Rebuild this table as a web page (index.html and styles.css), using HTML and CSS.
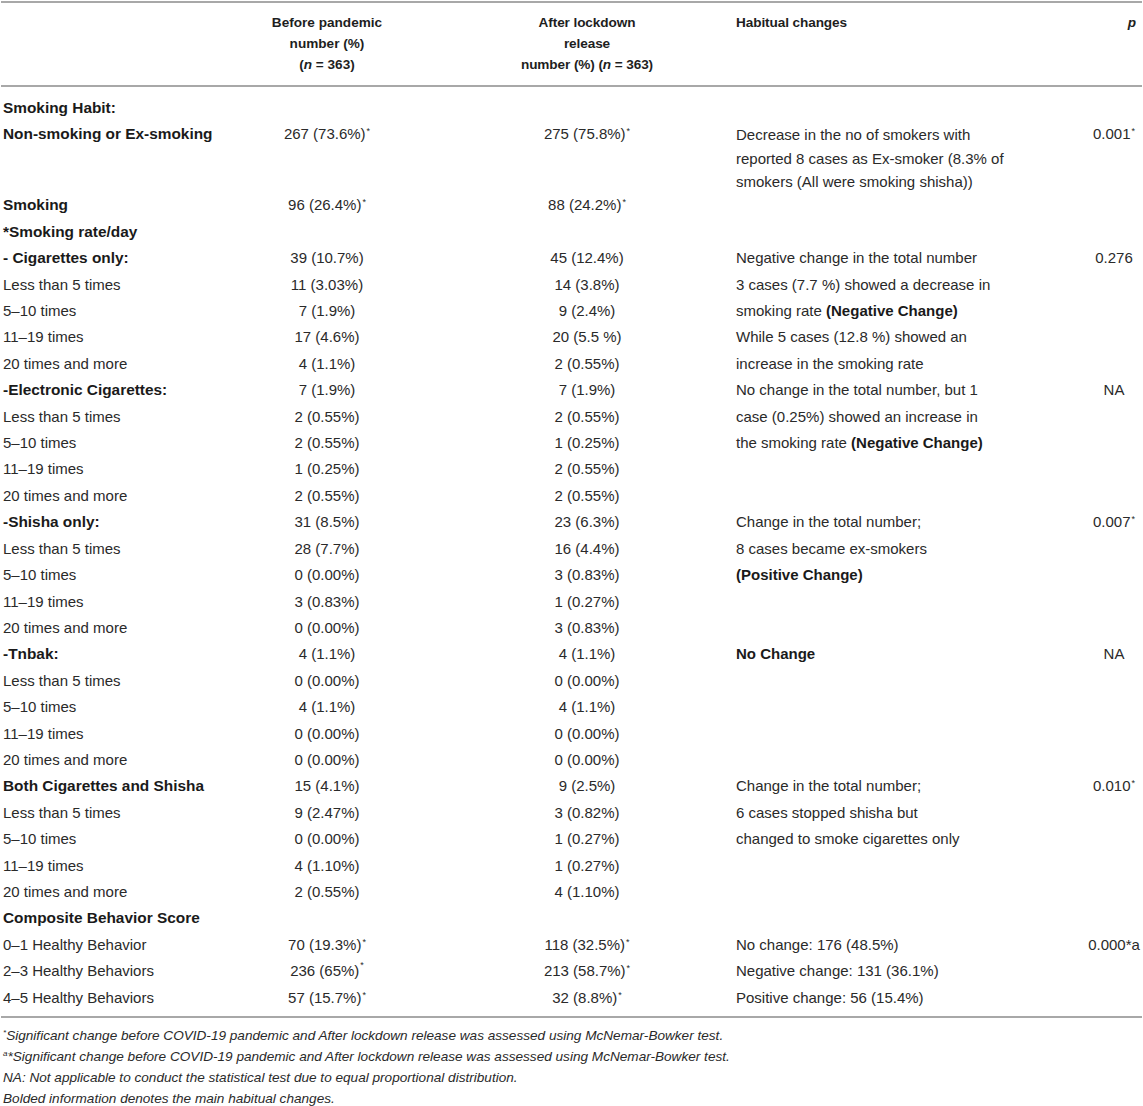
FILE: index.html
```html
<!DOCTYPE html>
<html>
<head>
<meta charset="utf-8">
<link rel="stylesheet" href="styles.css">
</head>
<body>
<div class="wrap">
<table class="tbl">
<colgroup>
<col class="c1"><col class="c2"><col class="c3"><col class="c4"><col class="c5">
</colgroup>
<thead>
<tr>
<th class="h-first"></th>
<th class="h-num">Before pandemic<br>number (%)<br>(<i>n</i> = 363)</th>
<th class="h-num h-narrow">After lockdown<br>release<br>number (%) (<i>n</i> = 363)</th>
<th class="h-text h-narrow">Habitual changes</th>
<th class="h-p"><i>p</i></th>
</tr>
</thead>
<tbody>
<tr class="first"><td class="b">Smoking Habit:</td><td></td><td></td><td></td><td></td></tr>
<tr class="multi"><td class="b">Non-smoking or Ex-smoking</td><td class="n">267 (73.6%)<sup>*</sup></td><td class="n">275 (75.8%)<sup>*</sup></td><td class="t"><div class="lines">Decrease in the no of smokers with<br>reported 8 cases as Ex-smoker (8.3% of<br>smokers (All were smoking shisha))</div></td><td class="n">0.001<sup>*</sup></td></tr>
<tr><td class="b">Smoking</td><td class="n">96 (26.4%)<sup>*</sup></td><td class="n">88 (24.2%)<sup>*</sup></td><td></td><td></td></tr>
<tr><td class="b">*Smoking rate/day</td><td></td><td></td><td></td><td></td></tr>
<tr><td class="b">- Cigarettes only:</td><td class="n">39 (10.7%)</td><td class="n">45 (12.4%)</td><td class="t">Negative change in the total number</td><td class="n">0.276</td></tr>
<tr><td>Less than 5 times</td><td class="n">11 (3.03%)</td><td class="n">14 (3.8%)</td><td class="t">3 cases (7.7 %) showed a decrease in</td><td></td></tr>
<tr><td>5–10 times</td><td class="n">7 (1.9%)</td><td class="n">9 (2.4%)</td><td class="t">smoking rate <b>(Negative Change)</b></td><td></td></tr>
<tr><td>11–19 times</td><td class="n">17 (4.6%)</td><td class="n">20 (5.5 %)</td><td class="t">While 5 cases (12.8 %) showed an</td><td></td></tr>
<tr><td>20 times and more</td><td class="n">4 (1.1%)</td><td class="n">2 (0.55%)</td><td class="t">increase in the smoking rate</td><td></td></tr>
<tr><td class="b">-Electronic Cigarettes:</td><td class="n">7 (1.9%)</td><td class="n">7 (1.9%)</td><td class="t">No change in the total number, but 1</td><td class="n">NA</td></tr>
<tr><td>Less than 5 times</td><td class="n">2 (0.55%)</td><td class="n">2 (0.55%)</td><td class="t">case (0.25%) showed an increase in</td><td></td></tr>
<tr><td>5–10 times</td><td class="n">2 (0.55%)</td><td class="n">1 (0.25%)</td><td class="t">the smoking rate <b>(Negative Change)</b></td><td></td></tr>
<tr><td>11–19 times</td><td class="n">1 (0.25%)</td><td class="n">2 (0.55%)</td><td></td><td></td></tr>
<tr><td>20 times and more</td><td class="n">2 (0.55%)</td><td class="n">2 (0.55%)</td><td></td><td></td></tr>
<tr><td class="b">-Shisha only:</td><td class="n">31 (8.5%)</td><td class="n">23 (6.3%)</td><td class="t">Change in the total number;</td><td class="n">0.007<sup>*</sup></td></tr>
<tr><td>Less than 5 times</td><td class="n">28 (7.7%)</td><td class="n">16 (4.4%)</td><td class="t">8 cases became ex-smokers</td><td></td></tr>
<tr><td>5–10 times</td><td class="n">0 (0.00%)</td><td class="n">3 (0.83%)</td><td class="t"><b>(Positive Change)</b></td><td></td></tr>
<tr><td>11–19 times</td><td class="n">3 (0.83%)</td><td class="n">1 (0.27%)</td><td></td><td></td></tr>
<tr><td>20 times and more</td><td class="n">0 (0.00%)</td><td class="n">3 (0.83%)</td><td></td><td></td></tr>
<tr><td class="b">-Tnbak:</td><td class="n">4 (1.1%)</td><td class="n">4 (1.1%)</td><td class="t"><b>No Change</b></td><td class="n">NA</td></tr>
<tr><td>Less than 5 times</td><td class="n">0 (0.00%)</td><td class="n">0 (0.00%)</td><td></td><td></td></tr>
<tr><td>5–10 times</td><td class="n">4 (1.1%)</td><td class="n">4 (1.1%)</td><td></td><td></td></tr>
<tr><td>11–19 times</td><td class="n">0 (0.00%)</td><td class="n">0 (0.00%)</td><td></td><td></td></tr>
<tr><td>20 times and more</td><td class="n">0 (0.00%)</td><td class="n">0 (0.00%)</td><td></td><td></td></tr>
<tr><td class="b">Both Cigarettes and Shisha</td><td class="n">15 (4.1%)</td><td class="n">9 (2.5%)</td><td class="t">Change in the total number;</td><td class="n">0.010<sup>*</sup></td></tr>
<tr><td>Less than 5 times</td><td class="n">9 (2.47%)</td><td class="n">3 (0.82%)</td><td class="t">6 cases stopped shisha but</td><td></td></tr>
<tr><td>5–10 times</td><td class="n">0 (0.00%)</td><td class="n">1 (0.27%)</td><td class="t">changed to smoke cigarettes only</td><td></td></tr>
<tr><td>11–19 times</td><td class="n">4 (1.10%)</td><td class="n">1 (0.27%)</td><td></td><td></td></tr>
<tr><td>20 times and more</td><td class="n">2 (0.55%)</td><td class="n">4 (1.10%)</td><td></td><td></td></tr>
<tr><td class="b">Composite Behavior Score</td><td></td><td></td><td></td><td></td></tr>
<tr><td>0–1 Healthy Behavior</td><td class="n">70 (19.3%)<sup>*</sup></td><td class="n">118 (32.5%)<sup>*</sup></td><td class="t">No change: 176 (48.5%)</td><td class="n">0.000*a</td></tr>
<tr><td>2–3 Healthy Behaviors</td><td class="n">236 (65%)<sup class="hi">*</sup></td><td class="n">213 (58.7%)<sup>*</sup></td><td class="t">Negative change: 131 (36.1%)</td><td></td></tr>
<tr class="last"><td>4–5 Healthy Behaviors</td><td class="n">57 (15.7%)<sup>*</sup></td><td class="n">32 (8.8%)<sup>*</sup></td><td class="t">Positive change: 56 (15.4%)</td><td></td></tr>
</tbody>
</table>
<div class="notes">
<p><sup>*</sup>Significant change before COVID-19 pandemic and After lockdown release was assessed using McNemar-Bowker test.</p>
<p><sup>a</sup>*Significant change before COVID-19 pandemic and After lockdown release was assessed using McNemar-Bowker test.</p>
<p>NA: Not applicable to conduct the statistical test due to equal proportional distribution.</p>
<p>Bolded information denotes the main habitual changes.</p>
</div>
</div>
</body>
</html>
```
FILE: styles.css
```css
html, body {
  margin: 0;
  padding: 0;
  background: #ffffff;
}
body {
  font-family: "Liberation Sans", Arial, sans-serif;
  color: #222222;
}
.wrap {
  width: 1141px;
  margin-left: 1px;
  padding-top: 1px;
}
.tbl {
  width: 1141px;
  border-collapse: collapse;
  table-layout: fixed;
  font-size: 15px;
}
.c1 { width: 196px; }
.c2 { width: 260px; }
.c3 { width: 260px; }
.c4 { width: 369px; }
.c5 { width: 56px; }

.tbl thead tr {
  border-top: 2px solid #a8a8a8;
  border-bottom: 2px solid #a8a8a8;
}
.tbl th {
  font-weight: bold;
  font-size: 13.6px;
  line-height: 21px;
  padding: 9px 4px 10px 4px;
  vertical-align: top;
  color: #1e1e1e;
}
.h-num { text-align: center; }
.h-text { text-align: left; padding-left: 19px !important; }
.h-narrow { font-size: 13px; letter-spacing: -0.1px; }
.h-p { text-align: right; padding-right: 6px !important; }

.tbl td {
  padding: 3px 4px;
  line-height: 20.4px;
  vertical-align: top;
  white-space: nowrap;
  color: #2a2a2a;
}
.tbl td.b {
  font-weight: bold;
  font-size: 15.4px;
  color: #1a1a1a;
  padding-left: 2px;
}
.tbl td:first-child { padding-left: 2px; }
.tbl td.n { text-align: center; }
.tbl td:last-child { padding-left: 0; padding-right: 0; }
.tbl td.t { padding-left: 19px; }
.tbl td.t b { font-size: 15px; color: #1a1a1a; }
.tbl tr.multi td.t { padding-top: 2px; padding-bottom: 0; }
.tbl tr.multi td.t .lines { line-height: 23.5px; margin-bottom: -1.5px; }
.tbl tr.first td { padding-top: 11px; }
.tbl tr.last td { padding-bottom: 8px; }
.tbl tbody tr.last { border-bottom: 2px solid #a8a8a8; }

sup {
  font-size: 9px;
  line-height: 0;
  vertical-align: 5px;
  margin-left: 1px;
}
sup.hi { vertical-align: 8px; }

.notes {
  padding-top: 6.5px;
  padding-left: 2px;
  font-style: italic;
  font-size: 13.6px;
  color: #2a2a2a;
}
.notes p {
  margin: 0;
  line-height: 21px;
}
.notes sup {
  font-size: 8px;
  vertical-align: 5px;
  margin-left: 0;
}
```
